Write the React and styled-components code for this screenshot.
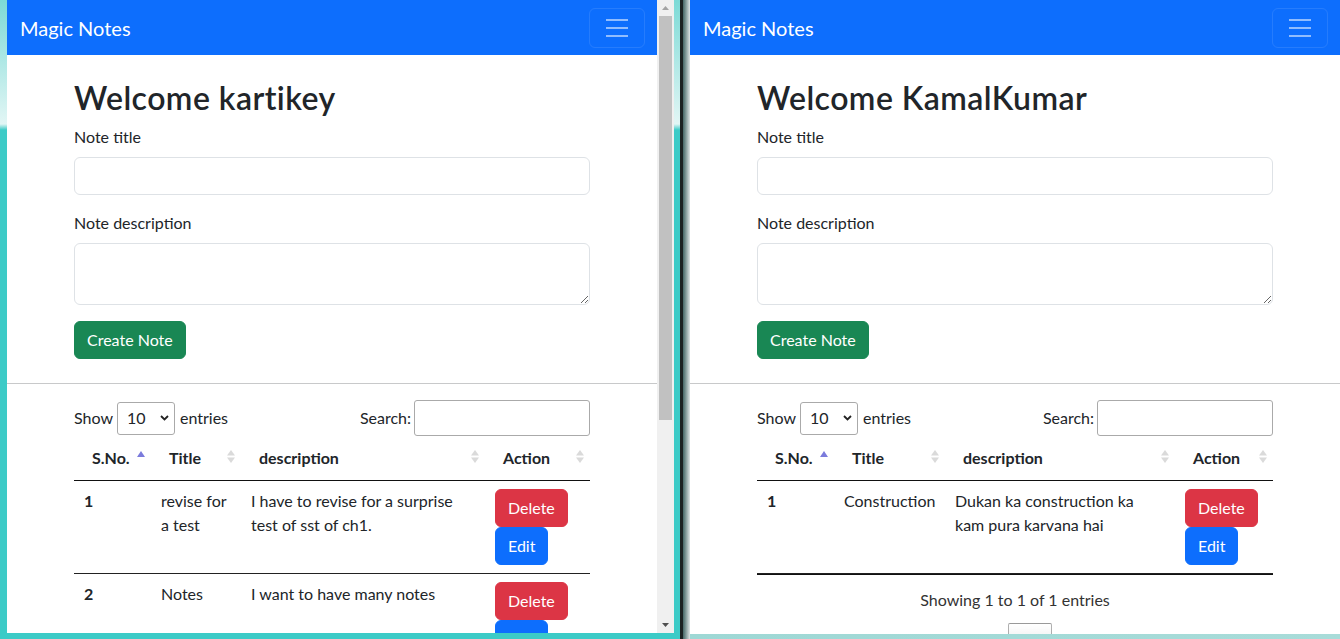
import React from "react";
import styled, { createGlobalStyle } from "styled-components";

const Global = createGlobalStyle`
  html, body { margin: 0; padding: 0; background: #fff; }
  body {
    font-family: Lato, "Noto Sans", "Liberation Sans", sans-serif;
    color: #212529;
    font-size: 16px;
    line-height: 24px;
  }
  * { box-sizing: border-box; }
`;

const Desktop = styled.div`
  display: flex;
  width: 1340px;
  height: 639px;
  overflow: hidden;
`;

const LeftFrame = styled.div`
  flex: none;
  width: 680px;
  height: 639px;
  padding: 0 6px 6px 7px;
  background: linear-gradient(to bottom, #7cdad6 0px, #e2f6f5 124px, #3ccbc7 130px, #3ccbc7 100%);
`;

const Viewport = styled.div`
  display: flex;
  height: ${(p) => p.$h}px;
  background: #fff;
  overflow: hidden;
`;

const Divider = styled.div`
  flex: none;
  width: 3px;
  height: 639px;
  background: #1c2222;
`;

const Shadow = styled.div`
  flex: none;
  width: 7px;
  height: 639px;
  background: linear-gradient(to right, #456766 0%, #7f9796 40%, #dfe5e5 100%);
`;

const RightFrame = styled.div`
  flex: none;
  width: 650px;
  height: 639px;
  padding-bottom: 5px;
  background: linear-gradient(to right, #9ed8d5, #a8dcd9);
`;

const Page = styled.div`
  flex: none;
  width: 650px;
  height: 100%;
  overflow: hidden;
  background: #fff;
`;

const Scrollbar = styled.div`
  flex: none;
  width: 17px;
  height: 100%;
  background: #f0f0f0;
  display: flex;
  flex-direction: column;
  align-items: center;
`;

const ScrollArrow = styled.div`
  flex: none;
  height: 16px;
  width: 17px;
  display: flex;
  align-items: center;
  justify-content: center;
`;

const ScrollThumb = styled.div`
  flex: none;
  width: 13px;
  height: 404px;
  background: #c1c1c1;
`;

const ScrollSpacer = styled.div`
  flex: 1;
`;

const Navbar = styled.nav`
  height: 55px;
  background: #0d6efd;
  display: flex;
  align-items: center;
  justify-content: space-between;
  padding: 0 12px 0 12px;
`;

const Brand = styled.span`
  color: #fff;
  font-size: 20px;
  line-height: 30px;
  padding-left: 1px;
`;

const Toggler = styled.button`
  width: 56px;
  height: 40px;
  padding: 4px 12px;
  border: 1px solid rgba(255, 255, 255, 0.1);
  border-radius: 6px;
  background: transparent;
  display: flex;
  align-items: center;
  justify-content: center;
`;

const Container = styled.div`
  width: 516px;
  margin: ${(p) => (p.$flush ? "0 auto" : "24px auto 0")};
`;

const Heading = styled.h1`
  font-size: 32px;
  line-height: 38px;
  font-weight: 600;
  margin: 0 0 8px;
  letter-spacing: 0.45px;
`;

const Field = styled.div`
  margin-bottom: 16px;
`;

const Label = styled.label`
  display: block;
  margin-bottom: 8px;
  line-height: 24px;
`;

const TextInput = styled.input`
  display: block;
  width: 100%;
  height: 38px;
  border: 1px solid #dee2e6;
  border-radius: 6px;
  font: inherit;
  padding: 6px 12px;
`;

const TextArea = styled.textarea`
  display: block;
  width: 100%;
  height: 62px;
  border: 1px solid #dee2e6;
  border-radius: 6px;
  font: inherit;
  padding: 6px 12px;
  resize: vertical;
`;

const Button = styled.button`
  display: inline-block;
  height: 38px;
  padding: 6px 12px;
  border: 1px solid ${(p) => p.$bg};
  border-radius: 6px;
  background: ${(p) => p.$bg};
  color: #fff;
  font: inherit;
  line-height: 24px;
  white-space: nowrap;
`;

const Rule = styled.hr`
  margin: 24px 0 16px;
  border: 0;
  border-top: 1px solid #c8c9ca;
`;

const Toolbar = styled.div`
  display: flex;
  align-items: center;
  justify-content: space-between;
  height: 36px;
`;

const ToolLabel = styled.label`
  display: flex;
  align-items: center;
  gap: 3px;
  white-space: nowrap;
`;

const SelectWrap = styled.span`
  position: relative;
  display: inline-block;
  margin: 0 2px 0 1px;
`;

const Select = styled.select`
  appearance: none;
  width: 58px;
  height: 33px;
  border: 1px solid #aaa;
  border-radius: 3px;
  background: #fff;
  font: inherit;
  color: #212529;
  padding: 0 0 0 9px;
`;

const Chevron = styled.svg`
  position: absolute;
  right: 6px;
  top: 13px;
  pointer-events: none;
`;

const SearchInput = styled.input`
  width: 176px;
  height: 36px;
  border: 1px solid #aaa;
  border-radius: 3px;
  font: inherit;
  padding: 0 6px;
`;

const Table = styled.table`
  width: 516px;
  table-layout: fixed;
  border-collapse: separate;
  border-spacing: 0;
  border-bottom: ${(p) => (p.$closed ? "1px solid #111" : "0")};
`;

const Th = styled.th`
  position: relative;
  text-align: left;
  font-weight: 700;
  padding: 10px 18px;
  line-height: 24px;
  border-bottom: 1px solid #111;
  white-space: nowrap;
`;

const SortIcon = styled.svg`
  position: absolute;
  right: ${(p) => p.$right}px;
  top: ${(p) => p.$top}px;
`;

const Td = styled.td`
  padding: 8px 10px;
  vertical-align: top;
  line-height: 24px;
  border-bottom: 1px solid #222;
  font-weight: ${(p) => (p.$bold ? 700 : 400)};
`;

const ActionStack = styled.div`
  display: flex;
  flex-direction: column;
  align-items: flex-start;
`;

const Info = styled.div`
  text-align: center;
  padding-top: 13px;
  line-height: 24px;
  color: #333;
`;

const Pager = styled.div`
  display: flex;
  justify-content: center;
  gap: 2px;
  margin-top: 11px;
  padding-left: 4px;
`;

const PageBtn = styled.span`
  display: inline-block;
  padding: 8px 16px;
  min-width: 24px;
  line-height: 24px;
  border: 1px solid ${(p) => (p.$current ? "rgba(0,0,0,0.3)" : "transparent")};
  border-radius: 2px;
  background: ${(p) => (p.$current ? "linear-gradient(#fff, #dcdcdc)" : "transparent")};
  color: ${(p) => (p.$current ? "#333" : "#666")};
  text-align: center;
`;

function HamburgerIcon() {
  return (
    <svg width="30" height="30" viewBox="0 0 30 30">
      <path
        d="M4 7h22M4 15h22M4 23h22"
        stroke="rgba(255,255,255,0.55)"
        strokeWidth="2"
        strokeLinecap="butt"
      />
    </svg>
  );
}

function Sort({ active }) {
  if (active) {
    return (
      <SortIcon $right={6} $top={15} width="8" height="6" viewBox="0 0 8 6">
        <polygon points="0,6 4,0 8,6" fill="#7b7bdc" />
      </SortIcon>
    );
  }
  return (
    <SortIcon $right={6} $top={14} width="8" height="13" viewBox="0 0 8 13">
      <polygon points="0,5.5 4,0 8,5.5" fill="#dadada" />
      <polygon points="0,7.5 4,13 8,7.5" fill="#dadada" />
    </SortIcon>
  );
}

function NotesApp({ user, notes, widths, closed }) {
  return (
    <Page>
      <Navbar>
        <Brand>Magic Notes</Brand>
        <Toggler aria-label="Toggle navigation">
          <HamburgerIcon />
        </Toggler>
      </Navbar>
      <Container>
        <Heading>Welcome {user}</Heading>
        <Field>
          <Label>Note title</Label>
          <TextInput type="text" />
        </Field>
        <Field>
          <Label>Note description</Label>
          <TextArea rows={2} />
        </Field>
        <Button $bg="#198754">Create Note</Button>
      </Container>
      <Rule />
      <Container as="section" $flush>
        <Toolbar>
          <ToolLabel>
            Show
            <SelectWrap>
              <Select defaultValue="10">
                <option value="10">10</option>
                <option value="25">25</option>
                <option value="50">50</option>
                <option value="100">100</option>
              </Select>
              <Chevron width="9" height="6" viewBox="0 0 9 6">
                <path d="M1 1l3.5 3.5L8 1" stroke="#222" strokeWidth="1.8" fill="none" />
              </Chevron>
            </SelectWrap>
            entries
          </ToolLabel>
          <ToolLabel>
            Search:
            <SearchInput type="search" />
          </ToolLabel>
        </Toolbar>
        <Table $closed={closed}>
          <colgroup>
            {widths.map((w, i) => (
              <col key={i} style={{ width: w }} />
            ))}
          </colgroup>
          <thead>
            <tr>
              <Th>
                S.No.
                <Sort active />
              </Th>
              <Th>
                Title
                <Sort />
              </Th>
              <Th>
                description
                <Sort />
              </Th>
              <Th>
                Action
                <Sort />
              </Th>
            </tr>
          </thead>
          <tbody>
            {notes.map((n, i) => (
              <tr key={i}>
                <Td $bold>{i + 1}</Td>
                <Td>{n.title}</Td>
                <Td>{n.desc}</Td>
                <Td>
                  <ActionStack>
                    <Button $bg="#dc3545">Delete</Button>
                    <Button $bg="#0d6efd">Edit</Button>
                  </ActionStack>
                </Td>
              </tr>
            ))}
          </tbody>
        </Table>
        {closed && (
          <>
            <Info>Showing 1 to {notes.length} of {notes.length} entries</Info>
            <Pager>
              <PageBtn>Previous</PageBtn>
              <PageBtn $current>1</PageBtn>
              <PageBtn>Next</PageBtn>
            </Pager>
          </>
        )}
      </Container>
    </Page>
  );
}

export default function App() {
  return (
    <>
      <Global />
      <Desktop>
        <LeftFrame>
          <Viewport $h={633}>
            <NotesApp
              user="kartikey"
              widths={[77, 90, 244, 105]}
              notes={[
                { title: "revise for a test", desc: "I have to revise for a surprise test of sst of ch1." },
                { title: "Notes", desc: "I want to have many notes" },
              ]}
            />
            <Scrollbar>
              <ScrollArrow>
                <svg width="7" height="4" viewBox="0 0 7 4">
                  <polygon points="0,4 3.5,0 7,4" fill="#a3a3a3" />
                </svg>
              </ScrollArrow>
              <ScrollThumb />
              <ScrollSpacer />
              <ScrollArrow>
                <svg width="7" height="4" viewBox="0 0 7 4">
                  <polygon points="0,0 3.5,4 7,0" fill="#505050" />
                </svg>
              </ScrollArrow>
            </Scrollbar>
          </Viewport>
        </LeftFrame>
        <Divider />
        <Shadow />
        <RightFrame>
          <Viewport $h={634}>
            <NotesApp
              user="KamalKumar"
              widths={[77, 111, 230, 98]}
              closed
              notes={[{ title: "Construction", desc: "Dukan ka construction ka kam pura karvana hai" }]}
            />
          </Viewport>
        </RightFrame>
      </Desktop>
    </>
  );
}
